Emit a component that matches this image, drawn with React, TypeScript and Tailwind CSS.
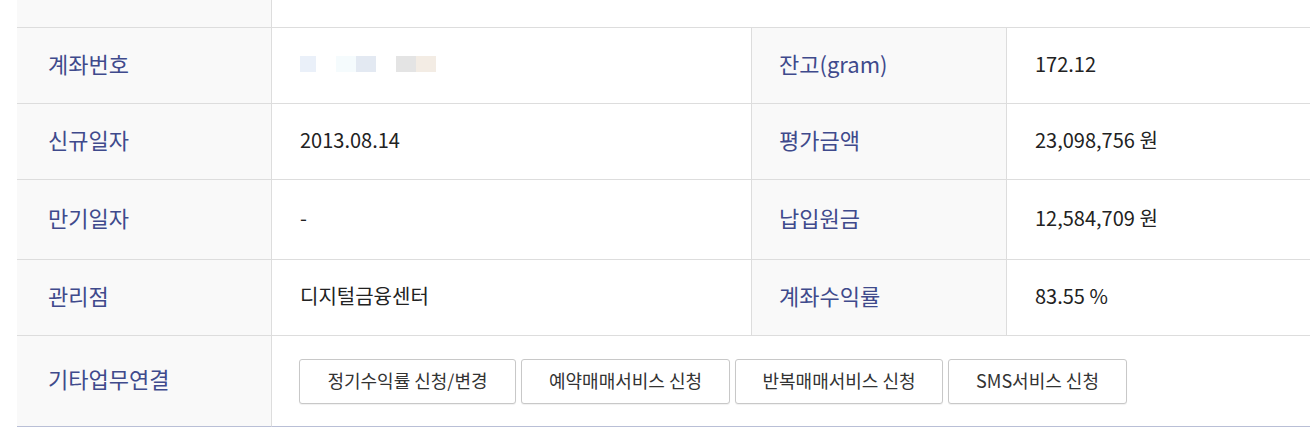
import React from 'react'

const font = { fontFamily: '"Noto Sans CJK KR", "Noto Sans", sans-serif' }

interface Row {
  label: string
  value: React.ReactNode
  label2: string
  value2: string
  height: string
}

const MaskedAccount = () => (
  <div className="flex items-center h-4">
    <span className="w-4 h-4 bg-[#eaf0f9]" />
    <span className="w-5 h-4 ml-5 bg-[#f5fbfd]" />
    <span className="w-5 h-4 bg-[#e3e9f2]" />
    <span className="w-5 h-4 ml-5 bg-[#e4e4e4]" />
    <span className="w-5 h-4 bg-[#f3ece4]" />
  </div>
)

const rows: Row[] = [
  { label: '계좌번호', value: <MaskedAccount />, label2: '잔고(gram)', value2: '172.12', height: 'h-[76px]' },
  { label: '신규일자', value: '2013.08.14', label2: '평가금액', value2: '23,098,756 원', height: 'h-[76px]' },
  { label: '만기일자', value: '-', label2: '납입원금', value2: '12,584,709 원', height: 'h-[80px]' },
  { label: '관리점', value: '디지털금융센터', label2: '계좌수익률', value2: '83.55 %', height: 'h-[76px]' },
]

const services = ['정기수익률 신청/변경', '예약매매서비스 신청', '반복매매서비스 신청', 'SMS서비스 신청']

const labelCls = 'flex items-center pb-[5px] bg-[#f9f9f9] border-r border-b border-[#dddddd] text-[22px] text-[#3f4a8c]'
const valueCls = 'flex items-center pb-[4px] pl-[28px] border-r border-b border-[#dddddd] text-[20px] text-[#222222]'

export default function App() {
  return (
    <div className="w-[1310px] h-[442px] bg-white overflow-hidden" style={font}>
      <div className="ml-[17px] grid grid-cols-[255px_480px_255px_1fr]">
        <div className="h-[28px] bg-[#f9f9f9] border-r border-b border-[#dddddd]" />
        <div className="col-span-3 h-[28px] border-b border-[#dddddd]" />

        {rows.map(r => (
          <React.Fragment key={r.label}>
            <div className={`${labelCls} pl-[31px] ${r.height}`}>{r.label}</div>
            <div className={`${valueCls} ${r.height}`}>{r.value}</div>
            <div className={`${labelCls} pl-[27px] ${r.height}`}>{r.label2}</div>
            <div className={`${valueCls} border-r-0 ${r.height}`}>{r.value2}</div>
          </React.Fragment>
        ))}

        <div className="flex items-center h-[91px] pb-[5px] pl-[31px] bg-[#f9f9f9] border-r border-b border-r-[#dddddd] border-b-[#b9bfd6] text-[22px] text-[#3f4a8c]">
          기타업무연결
        </div>
        <div className="col-span-3 flex items-center gap-[5px] h-[91px] pl-[27px] border-b border-[#b9bfd6]">
          {services.map((s, i) => (
            <button
              key={s}
              className={`h-[45px] pb-[2px] rounded-[3px] border border-[#c8c8c8] bg-white text-[18px] text-[#333333] shadow-[0_1px_1px_rgba(0,0,0,0.06)] ${
                i === 0 ? 'w-[217px]' : i === 1 ? 'w-[209px]' : i === 2 ? 'w-[208px]' : 'w-[179px]'
              }`}
            >
              {s}
            </button>
          ))}
        </div>
      </div>
    </div>
  )
}
